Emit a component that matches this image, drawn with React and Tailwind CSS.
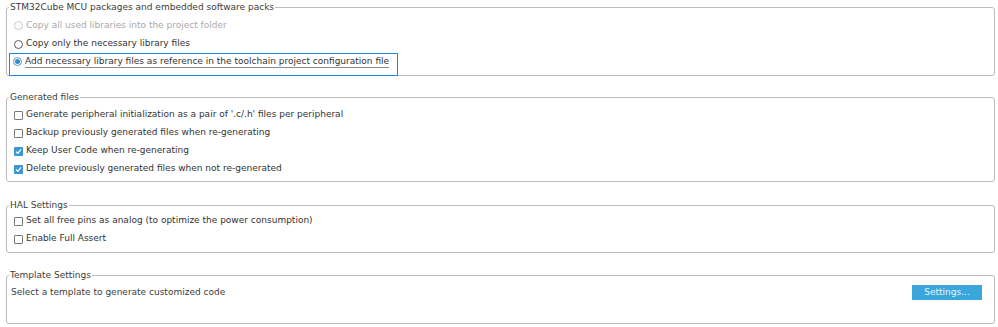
import React from 'react';

const font = { fontFamily: '"DejaVu Sans", Verdana, sans-serif' };

const Radio = ({ checked, disabled }) => (
  <span
    className={`flex h-[9px] w-[9px] shrink-0 items-center justify-center rounded-full border bg-white ${
      disabled ? 'border-[#c8c8c8]' : checked ? 'border-[#5b93c4]' : 'border-[#5a5a5a]'
    }`}
  >
    {checked && <span className="h-[5px] w-[5px] rounded-full bg-[#2f8fd6]" />}
  </span>
);

const Checkbox = ({ checked }) =>
  checked ? (
    <span className="flex h-[9px] w-[9px] shrink-0 items-center justify-center rounded-[1px] bg-[#3b97d3]">
      <svg width="7" height="7" viewBox="0 0 7 7">
        <path d="M1 3.6 L2.8 5.3 L6 1.4" fill="none" stroke="#fff" strokeWidth="1.3" />
      </svg>
    </span>
  ) : (
    <span className="h-[9px] w-[9px] shrink-0 rounded-[1px] border border-[#7a7a7a] bg-white" />
  );

const Group = ({ title, className = '', children }) => (
  <fieldset className={`ml-[6px] mr-[3px] rounded-[3px] border border-[#bdbdbd] ${className}`}>
    <legend className="ml-[2px] px-[1px] text-[9px] leading-[12px] text-[#3c3c3c]">{title}</legend>
    {children}
  </fieldset>
);

const Row = ({ h = 'h-[18px]', children }) => (
  <div className={`flex ${h} items-center gap-[3px] pl-[7px] text-[9px] text-[#333]`}>{children}</div>
);

export default function App() {
  return (
    <div className="h-[327px] w-[998px] overflow-hidden bg-white pt-px" style={font}>
      <Group title="STM32Cube MCU packages and embedded software packs" className="h-[75px]">
        <div className="pt-[3px]">
          <Row h="h-[19px]">
            <Radio disabled />
            <span className="text-[#aaaaaa]">Copy all used libraries into the project folder</span>
          </Row>
          <Row>
            <Radio />
            <span>Copy only the necessary library files</span>
          </Row>
          <div className="ml-[3px] mt-px flex h-[21px] w-[387px] items-start gap-[3px] pl-[3px] pt-[2px] text-[9px] text-[#333] ring-1 ring-[#1e88e5]">
            <div className="mt-[1px]">
              <Radio checked />
            </div>
            <span className="border-b border-[#8c8c8c] leading-[11px]">
              Add necessary library files as reference in the toolchain project configuration file
            </span>
          </div>
        </div>
      </Group>

      <Group title="Generated files" className="mt-[15px] h-[91px]">
        <div className="pt-[3px]">
          <Row>
            <Checkbox />
            <span>Generate peripheral initialization as a pair of '.c/.h' files per peripheral</span>
          </Row>
          <Row>
            <Checkbox />
            <span>Backup previously generated files when re-generating</span>
          </Row>
          <Row>
            <Checkbox checked />
            <span>Keep User Code when re-generating</span>
          </Row>
          <Row>
            <Checkbox checked />
            <span>Delete previously generated files when not re-generated</span>
          </Row>
        </div>
      </Group>

      <Group title="HAL Settings" className="mt-[17px] h-[54px]">
        <div className="pt-[1px]">
          <Row>
            <Checkbox />
            <span>Set all free pins as analog (to optimize the power consumption)</span>
          </Row>
          <Row>
            <Checkbox />
            <span>Enable Full Assert</span>
          </Row>
        </div>
      </Group>

      <Group title="Template Settings" className="mt-[16px] h-[55px]">
        <div className="flex h-[22px] items-center justify-between pl-[4px] pr-[12px] pt-[1px] text-[9px] text-[#3c3c3c]">
          <span>Select a template to generate customized code</span>
          <button className="h-[15px] w-[70px] bg-[#3aa6dc] text-[9px] text-[#e8f5fc]">Settings...</button>
        </div>
      </Group>
    </div>
  );
}
